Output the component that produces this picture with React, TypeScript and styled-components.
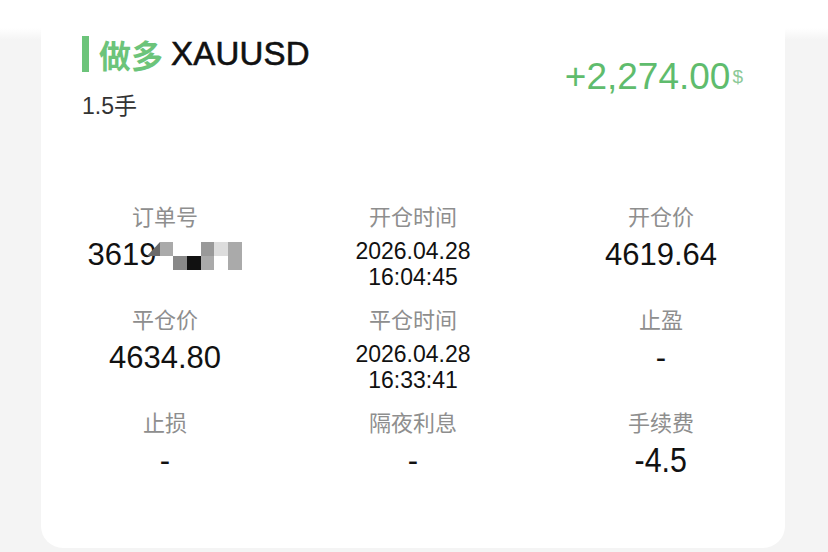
import React from "react";
import styled, { createGlobalStyle } from "styled-components";

const GlobalStyle = createGlobalStyle`
  html, body {
    margin: 0;
    padding: 0;
  }
  body {
    width: 828px;
    height: 552px;
    overflow: hidden;
    background: linear-gradient(#ffffff 0 28px, #f4f4f4 40px);
    font-family: "Liberation Sans", "Noto Sans CJK SC", sans-serif;
  }
`;

const Card = styled.div`
  margin-left: 41px;
  width: 744px;
  height: 548px;
  box-sizing: border-box;
  background: #fff;
  border-radius: 0 0 22px 22px;
  padding-top: 36px;
`;

const Header = styled.div`
  display: flex;
  justify-content: space-between;
  align-items: flex-start;
  padding: 0 42px 0 41px;
`;

const TitleBlock = styled.div`
  display: flex;
  flex-direction: column;
`;

const TitleRow = styled.div`
  display: flex;
  align-items: center;
  height: 36px;
`;

const Bar = styled.span`
  width: 7px;
  height: 36px;
  background: #6cc47a;
  margin-right: 10px;
`;

const Side = styled.span`
  font-family: "Noto Sans CJK SC", sans-serif;
  font-weight: 700;
  font-size: 32px;
  line-height: 36px;
  color: #6cc47a;
  margin-right: 8px;
`;

const Symbol = styled.span`
  font-size: 33px;
  line-height: 36px;
  color: #111;
  -webkit-text-stroke: 0.6px #111;
  letter-spacing: 0.2px;
`;

const Lots = styled.div`
  margin-top: 20px;
  font-size: 23px;
  line-height: 28px;
  color: #333;
`;

const Profit = styled.div`
  display: flex;
  align-items: flex-start;
  padding-top: 21px;
  color: #5fbc6d;
  font-size: 37px;
  line-height: 40px;
`;

const Currency = styled.span`
  font-size: 19px;
  line-height: 24px;
  margin-top: 8px;
  margin-left: 2px;
  color: #8cc997;
`;

const Grid = styled.div`
  display: grid;
  grid-template-columns: repeat(3, 1fr);
  row-gap: 15px;
  margin-top: 82px;
`;

const Cell = styled.div`
  display: flex;
  flex-direction: column;
  align-items: center;
`;

const Label = styled.div`
  font-family: "Noto Sans CJK SC", sans-serif;
  font-size: 22px;
  line-height: 26px;
  color: #8e8e8e;
  margin-bottom: 10px;
`;

const Value = styled.div<{ $tall?: boolean }>`
  display: flex;
  align-items: center;
  font-size: 31px;
  line-height: 34px;
  color: #111;
  transform: ${(p) => (p.$tall ? "scale(0.98, 1.12)" : "none")};
`;

const DateValue = styled.div`
  font-size: 23px;
  line-height: 26px;
  color: #111;
  text-align: center;
`;

const Mosaic = () => (
  <svg width="95" height="30" viewBox="0 0 95 30" style={{ marginLeft: -9 }}>
    <polygon points="0,16 13,2 13,16" fill="#6a6a6a" />
    <rect x="13" y="2" width="13" height="14" fill="#aaa" />
    <rect x="54" y="2" width="13" height="14" fill="#999" />
    <rect x="67" y="2" width="14" height="14" fill="#ddd" />
    <rect x="81" y="2" width="14" height="28" fill="#aaa" />
    <rect x="26" y="16" width="14" height="14" fill="#888" />
    <rect x="40" y="16" width="14" height="14" fill="#111" />
    <rect x="54" y="16" width="13" height="14" fill="#aaa" />
  </svg>
);

type Item = { label: string; value?: string; date?: [string, string]; tall?: boolean };

const items: Item[] = [
  { label: "订单号", value: "3619" },
  { label: "开仓时间", date: ["2026.04.28", "16:04:45"] },
  { label: "开仓价", value: "4619.64" },
  { label: "平仓价", value: "4634.80" },
  { label: "平仓时间", date: ["2026.04.28", "16:33:41"] },
  { label: "止盈", value: "-" },
  { label: "止损", value: "-" },
  { label: "隔夜利息", value: "-" },
  { label: "手续费", value: "-4.5", tall: true },
];

export default function App() {
  return (
    <>
      <GlobalStyle />
      <Card>
        <Header>
          <TitleBlock>
            <TitleRow>
              <Bar />
              <Side>做多</Side>
              <Symbol>XAUUSD</Symbol>
            </TitleRow>
            <Lots>1.5手</Lots>
          </TitleBlock>
          <Profit>
            +2,274.00<Currency>$</Currency>
          </Profit>
        </Header>
        <Grid>
          {items.map((it, i) => (
            <Cell key={i}>
              <Label>{it.label}</Label>
              {it.date ? (
                <DateValue>
                  {it.date[0]}
                  <br />
                  {it.date[1]}
                </DateValue>
              ) : (
                <Value $tall={it.tall}>
                  {it.value}
                  {i === 0 && <Mosaic />}
                </Value>
              )}
            </Cell>
          ))}
        </Grid>
      </Card>
    </>
  );
}
